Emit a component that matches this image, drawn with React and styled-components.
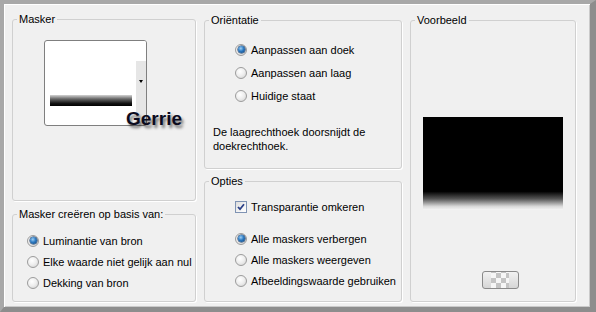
import React from "react";
import styled, { createGlobalStyle } from "styled-components";

const Global = createGlobalStyle`
  html, body { margin: 0; padding: 0; background: #f0f0f0; }
  body { font-family: "Liberation Sans", Arial, sans-serif; font-size: 11px; color: #000; }
`;

const Frame = styled.div`
  box-sizing: border-box;
  width: 596px;
  height: 312px;
  background: #f0f0f0;
  border-style: solid;
  border-width: 4px 6px 5px 4px;
  border-color: #a8a8a8 #8d8d8d #8d8d8d #a8a8a8;
  box-shadow: inset 1px 1px 0 #ffffff, inset -1px -1px 0 #cacaca;
  padding: 9px 0 0 8px;
  display: grid;
  grid-template-columns: 184px 198px 166px;
  column-gap: 8px;
  align-items: start;
`;

const Column = styled.div`
  display: flex;
  flex-direction: column;
  gap: ${(p) => p.$gap || 0}px;
  margin-top: ${(p) => p.$top || 0}px;
`;

const Group = styled.fieldset`
  box-sizing: border-box;
  margin: 0;
  padding: 0;
  min-width: 0;
  height: ${(p) => p.$h}px;
  border: 1px solid #d0d0d0;
  border-radius: 3px;
  box-shadow: 1px 1px 0 #ffffff;
  display: flex;
  flex-direction: column;
  position: relative;
`;

const Legend = styled.legend`
  margin-left: 4px;
  padding: 0 2px;
  line-height: 12px;
  font-size: 11px;
`;

const Picker = styled.div`
  position: relative;
  box-sizing: border-box;
  width: 103px;
  height: 86px;
  margin: 15px 0 0 31px;
  border: 1px solid #7f7f7f;
  border-radius: 3px;
  background: #fff;
  display: flex;
`;

const MaskArea = styled.div`
  flex: 1;
  padding: 54px 0 0 5px;
`;

const MaskBar = styled.div`
  width: 82px;
  height: 11px;
  background: linear-gradient(#d4d4d4 0%, #6a6a6a 35%, #141414 75%, #000 100%);
`;

const Strip = styled.div`
  position: relative;
  width: 10px;
  background: linear-gradient(to bottom, #ffffff 0, #ffffff 24%, #e6e6e6 24%, #e6e6e6 100%);
  border-radius: 0 2px 2px 0;
`;

const Arrow = styled.div`
  position: absolute;
  left: 3px;
  top: 39px;
  width: 0;
  height: 0;
  border-left: 2.5px solid transparent;
  border-right: 2.5px solid transparent;
  border-top: 3px solid #000;
`;

const Watermark = styled.span`
  position: absolute;
  left: 81px;
  top: 68px;
  font-family: "Liberation Sans", Arial, sans-serif;
  font-weight: bold;
  font-size: 19px;
  line-height: 19px;
  color: #0b0b1e;
  text-shadow: 2px 3px 3px rgba(0, 0, 0, 0.55);
  white-space: nowrap;
`;

const OptionList = styled.div`
  display: flex;
  flex-direction: column;
  padding: ${(p) => p.$pad};
`;

const Option = styled.div`
  display: flex;
  align-items: center;
  gap: 4px;
  height: ${(p) => p.$h}px;
  white-space: nowrap;
  margin-top: ${(p) => p.$mt || 0}px;
`;

const Radio = styled.span`
  box-sizing: border-box;
  flex: none;
  width: 12px;
  height: 12px;
  border-radius: 50%;
  border: 1px solid #9c9c9c;
  background: radial-gradient(circle at 40% 35%, #ffffff 0%, #ededed 50%, #cdcdcd 100%);
  display: flex;
  align-items: center;
  justify-content: center;
  &::after {
    content: "";
    display: ${(p) => (p.$checked ? "block" : "none")};
    width: 7px;
    height: 7px;
    border-radius: 50%;
    background: radial-gradient(circle at 40% 35%, #9fd0f5 0%, #2d7ac2 45%, #0d3c72 100%);
    box-shadow: 0 0 0 0.5px #0d2f5a;
  }
`;

const Check = styled.span`
  box-sizing: border-box;
  flex: none;
  width: 12px;
  height: 12px;
  border: 1px solid #7f93b3;
  background: linear-gradient(135deg, #dcdcdc 0%, #f4f4f4 60%, #ffffff 100%);
  display: flex;
  align-items: center;
  justify-content: center;
`;

const Description = styled.div`
  margin-top: 18px;
  padding-left: 8px;
  line-height: 14px;
`;

const PreviewArea = styled.div`
  display: flex;
  flex-direction: column;
  align-items: center;
  padding-top: 91px;
`;

const Preview = styled.div`
  width: 140px;
  height: 93px;
  background: linear-gradient(#000 0%, #000 80%, #555 88%, #d8d8d8 96%, #f6f6f6 100%);
`;

const TransButton = styled.div`
  box-sizing: border-box;
  margin: 61px 0 0 14px;
  width: 37px;
  height: 18px;
  border: 1px solid #8a8a8a;
  border-radius: 3px;
  background: linear-gradient(#f2f2f2, #d6d6d6);
  display: flex;
  justify-content: center;
  overflow: hidden;
`;

const Checker = styled.div`
  width: 18px;
  height: 100%;
  background-color: #f6f6f6;
  background-image: conic-gradient(#c4c4c4 25%, transparent 0 50%, #c4c4c4 0 75%, transparent 0);
  background-size: 10px 10px;
  background-position: 0 1px;
`;

function RadioOption({ h, checked, children, mt }) {
  return (
    <Option $h={h} $mt={mt}>
      <Radio $checked={checked} />
      <span>{children}</span>
    </Option>
  );
}

export default function App() {
  return (
    <>
      <Global />
      <Frame>
        <Column $gap={7}>
          <Group $h={188}>
            <Legend>Masker</Legend>
            <Picker>
              <MaskArea>
                <MaskBar />
              </MaskArea>
              <Strip>
                <Arrow />
              </Strip>
              <Watermark>Gerrie</Watermark>
            </Picker>
          </Group>
          <Group $h={94}>
            <Legend>Masker creëren op basis van:</Legend>
            <OptionList $pad="10px 0 0 14px">
              <RadioOption h={21} checked>Luminantie van bron</RadioOption>
              <RadioOption h={21}>Elke waarde niet gelijk aan nul</RadioOption>
              <RadioOption h={21}>Dekking van bron</RadioOption>
            </OptionList>
          </Group>
        </Column>

        <Column $gap={6} $top={1}>
          <Group $h={155}>
            <Legend>Oriëntatie</Legend>
            <OptionList $pad="12px 0 0 30px">
              <RadioOption h={23} checked>Aanpassen aan doek</RadioOption>
              <RadioOption h={23}>Aanpassen aan laag</RadioOption>
              <RadioOption h={23}>Huidige staat</RadioOption>
            </OptionList>
            <Description>
              De laagrechthoek doorsnijdt de
              <br />
              doekrechthoek.
            </Description>
          </Group>
          <Group $h={127}>
            <Legend>Opties</Legend>
            <OptionList $pad="9px 0 0 30px">
              <Option $h={21}>
                <Check>
                  <svg width="8" height="8" viewBox="0 0 8 8">
                    <path d="M1 4 L3 6.2 L7 1.2" fill="none" stroke="#2b3f86" strokeWidth="1.8" />
                  </svg>
                </Check>
                <span>Transparantie omkeren</span>
              </Option>
              <RadioOption h={21} mt={11} checked>Alle maskers verbergen</RadioOption>
              <RadioOption h={21}>Alle maskers weergeven</RadioOption>
              <RadioOption h={21}>Afbeeldingswaarde gebruiken</RadioOption>
            </OptionList>
          </Group>
        </Column>

        <Column $top={1}>
          <Group $h={288}>
            <Legend>Voorbeeld</Legend>
            <PreviewArea>
              <Preview />
              <TransButton>
                <Checker />
              </TransButton>
            </PreviewArea>
          </Group>
        </Column>
      </Frame>
    </>
  );
}
